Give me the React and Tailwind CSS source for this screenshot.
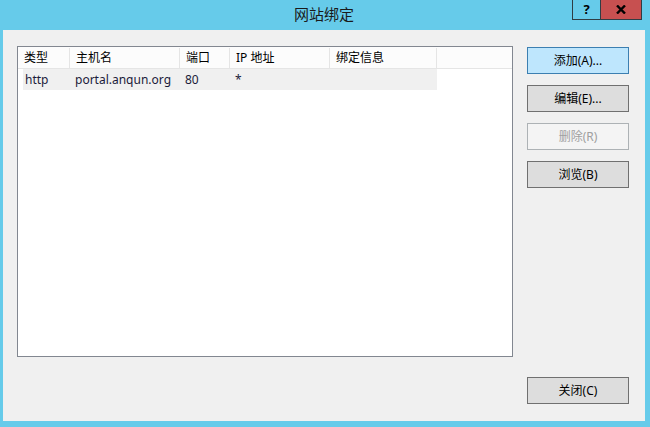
import React from "react";

const font = { fontFamily: '"Noto Sans", "Noto Sans CJK SC", sans-serif' };

const cols = [
  { label: "类型", w: "w-[52px]" },
  { label: "主机名", w: "w-[110px]" },
  { label: "端口", w: "w-[50px]" },
  { label: "IP 地址", w: "w-[100px]" },
  { label: "绑定信息", w: "w-[107px]" },
];

function Btn({ children, variant = "normal" }) {
  const base =
    "w-[102px] h-[27px] flex items-center justify-center text-[12px] border";
  const v =
    variant === "primary"
      ? "bg-[#bee6fd] border-[#3c7fb1] text-black"
      : variant === "disabled"
      ? "bg-[#f4f4f4] border-[#adb2b5] text-[#a0a0a0]"
      : "bg-[#dddddd] border-[#707070] text-black";
  return <div className={`${base} ${v}`}>{children}</div>;
}

export default function App() {
  return (
    <div
      className="w-[650px] h-[427px] bg-[#66cbea] flex flex-col pl-[3px] pr-[5px] pb-[6px]"
      style={font}
    >
      <div className="h-[30px] grid grid-cols-[1fr_auto_1fr] shrink-0">
        <div />
        <div className="text-[15px] text-[#1a1a1a] pt-[4px] leading-[20px]">网站绑定</div>
        <div className="flex justify-end items-start pr-[3px]">
          <div className="w-[28px] h-[20px] border border-t-0 border-r-0 border-[#2f3d44] flex items-center justify-center text-[13px] font-bold text-black leading-none">
            ?
          </div>
          <div className="w-[42px] h-[20px] bg-[#c75050] border border-t-0 border-[#2f3d44] flex items-center justify-center">
            <svg width="10" height="9" viewBox="0 0 10 9">
              <path d="M1 0.5 L9 8.5 M9 0.5 L1 8.5" stroke="#000" strokeWidth="2.4" />
            </svg>
          </div>
        </div>
      </div>
      <div className="flex-1 bg-[#f0f0f0] pl-[14px] pt-[16px] flex flex-col">
        <div className="flex">
          <div className="w-[496px] h-[311px] border border-[#828790] bg-white flex flex-col">
            <div className="h-[22px] flex bg-[#fcfcfc] border-b border-[#e5e5e5] pt-[1px]">
              {cols.map((c) => (
                <div
                  key={c.label}
                  className={`${c.w} h-full border-r border-[#e5e5e5] pl-[6px] text-[12px] text-black leading-[20px]`}
                >
                  {c.label}
                </div>
              ))}
            </div>
            <div className="ml-[5px] h-[21px] w-[414px] bg-[#f0f0f0] flex text-[12px] text-[#1b1b3a] leading-[21px]">
              <div className="w-[47px] pl-[2px]">http</div>
              <div className="w-[110px] pl-[5px]">portal.anqun.org</div>
              <div className="w-[50px] pl-[5px]">80</div>
              <div className="w-[100px] pl-[5px]">*</div>
              <div className="flex-1" />
            </div>
          </div>
          <div className="ml-[14px] mt-[1px] flex flex-col gap-[11px]">
            <Btn variant="primary">添加(A)...</Btn>
            <Btn>编辑(E)...</Btn>
            <Btn variant="disabled">删除(R)</Btn>
            <Btn>浏览(B)</Btn>
          </div>
        </div>
        <div className="flex justify-end pr-[16px] mt-[20px]">
          <Btn>关闭(C)</Btn>
        </div>
      </div>
    </div>
  );
}
